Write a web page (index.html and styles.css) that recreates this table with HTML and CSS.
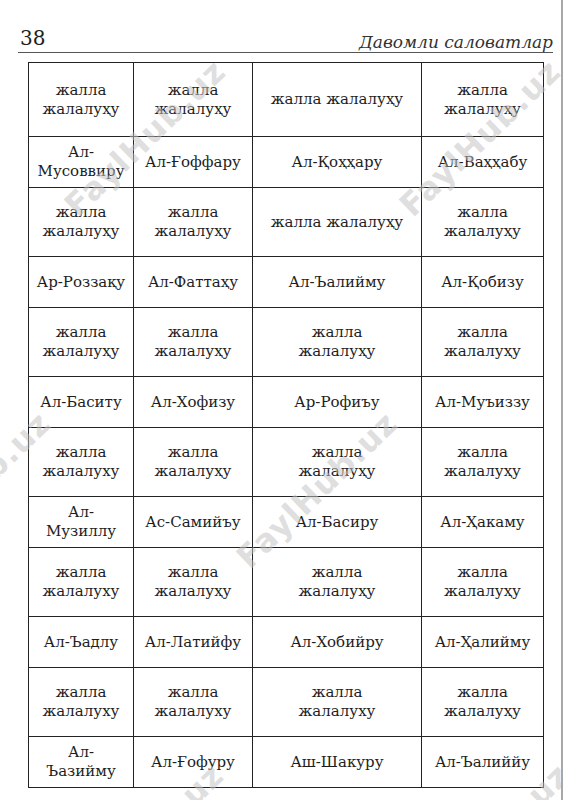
FILE: index.html
```html
<!DOCTYPE html>
<html lang="uz">
<head>
    <meta charset="UTF-8">
    <meta name="viewport" content="width=device-width, initial-scale=1.0">
    <title>Давомли саловатлар - 38</title>
    <link rel="stylesheet" href="styles.css">
</head>
<body>
    <div class="page">
        <div class="header">
            <span class="page-num">38</span>
            <span class="chapter">Давомли саловатлар</span>
        </div>

        <table class="names">
            <colgroup>
                <col class="c1">
                <col class="c2">
                <col class="c3">
                <col class="c4">
            </colgroup>
            <tr class="tall">
                <td>жалла<br>жалалуҳу</td>
                <td>жалла<br>жалалуҳу</td>
                <td>жалла жалалуҳу</td>
                <td>жалла<br>жалалуҳу</td>
            </tr>
            <tr class="short">
                <td>Ал-<br>Мусоввиру</td>
                <td>Ал-Ғоффару</td>
                <td>Ал-Қоҳҳару</td>
                <td>Ал-Ваҳҳабу</td>
            </tr>
            <tr class="tall">
                <td>жалла<br>жалалуҳу</td>
                <td>жалла<br>жалалуҳу</td>
                <td>жалла жалалуҳу</td>
                <td>жалла<br>жалалуҳу</td>
            </tr>
            <tr class="short">
                <td>Ар-Роззақу</td>
                <td>Ал-Фаттаҳу</td>
                <td>Ал-Ъалийму</td>
                <td>Ал-Қобизу</td>
            </tr>
            <tr class="tall">
                <td>жалла<br>жалалуҳу</td>
                <td>жалла<br>жалалуҳу</td>
                <td>жалла<br>жалалуҳу</td>
                <td>жалла<br>жалалуҳу</td>
            </tr>
            <tr class="short">
                <td>Ал-Баситу</td>
                <td>Ал-Хофизу</td>
                <td>Ар-Рофиъу</td>
                <td>Ал-Муъиззу</td>
            </tr>
            <tr class="tall">
                <td>жалла<br>жалалуху</td>
                <td>жалла<br>жалалуҳу</td>
                <td>жалла<br>жалалуҳу</td>
                <td>жалла<br>жалалуҳу</td>
            </tr>
            <tr class="short">
                <td>Ал-<br>Музиллу</td>
                <td>Ас-Самийъу</td>
                <td>Ал-Басиру</td>
                <td>Ал-Ҳакаму</td>
            </tr>
            <tr class="tall">
                <td>жалла<br>жалалуху</td>
                <td>жалла<br>жалалуҳу</td>
                <td>жалла<br>жалалуҳу</td>
                <td>жалла<br>жалалуҳу</td>
            </tr>
            <tr class="short">
                <td>Ал-Ъадлу</td>
                <td>Ал-Латийфу</td>
                <td>Ал-Хобийру</td>
                <td>Ал-Ҳалийму</td>
            </tr>
            <tr class="tall">
                <td>жалла<br>жалалуху</td>
                <td>жалла<br>жалалуху</td>
                <td>жалла<br>жалалуху</td>
                <td>жалла<br>жалалуҳу</td>
            </tr>
            <tr class="short">
                <td>Ал-<br>Ъазийму</td>
                <td>Ал-Ғофуру</td>
                <td>Аш-Шакуру</td>
                <td>Ал-Ъалиййу</td>
            </tr>
        </table>

        <!-- watermark, tiled over the scan -->
        <span class="mark" style="left: 145px; top: 138px;">FaylHub.uz</span>
        <span class="mark" style="left: 480px; top: 138px;">FaylHub.uz</span>
        <span class="mark" style="left: 317px; top: 490px;">FaylHub.uz</span>
        <span class="mark" style="left: -30px; top: 490px;">FaylHub.uz</span>
        <span class="mark" style="left: 143px; top: 842px;">FaylHub.uz</span>
        <span class="mark" style="left: 489px; top: 842px;">FaylHub.uz</span>
    </div>
</body>
</html>
```

FILE: styles.css
```css
body {
    margin: 0;
    padding: 0;
    background-color: #fff;
    font-family: "DejaVu Serif", "Liberation Serif", serif;
    color: #1e1e1e;
}

.page {
    position: relative;
    width: 561px;
    height: 800px;
    overflow: hidden;
    border-right: 2px solid #a8a8a8;
}

.header {
    display: flex;
    justify-content: space-between;
    align-items: flex-end;
    margin: 0 8px 0 18px;
    padding-top: 26px;
    padding-bottom: 2px;
    border-bottom: 1px solid #555;
    line-height: 24px;
}

.page-num {
    font-size: 20px;
    padding-left: 2px;
}

.chapter {
    font-size: 17px;
    font-style: italic;
    color: #333;
    position: relative;
    top: 4px;
}

.names {
    margin: 9px 0 0 28px;
    width: 515px;
    table-layout: fixed;
    border-collapse: collapse;
    font-size: 15px;
    line-height: 19px;
}

.c1 { width: 105px; }
.c2 { width: 119px; }
.c3 { width: 169px; }
.c4 { width: 122px; }

.names td {
    border: 1.5px solid #222;
    text-align: center;
    vertical-align: middle;
    white-space: nowrap;
    padding: 0 4px;
}

.names tr.tall { height: 69px; }
.names tr.short { height: 51px; }

.names tr:first-child { height: 74px; }

.mark {
    position: absolute;
    transform: translate(-50%, -50%) rotate(-44deg);
    font-family: "DejaVu Sans", sans-serif;
    font-weight: bold;
    font-size: 32px;
    letter-spacing: 1px;
    color: rgba(195, 195, 195, 0.55);
    white-space: nowrap;
    pointer-events: none;
}
```
